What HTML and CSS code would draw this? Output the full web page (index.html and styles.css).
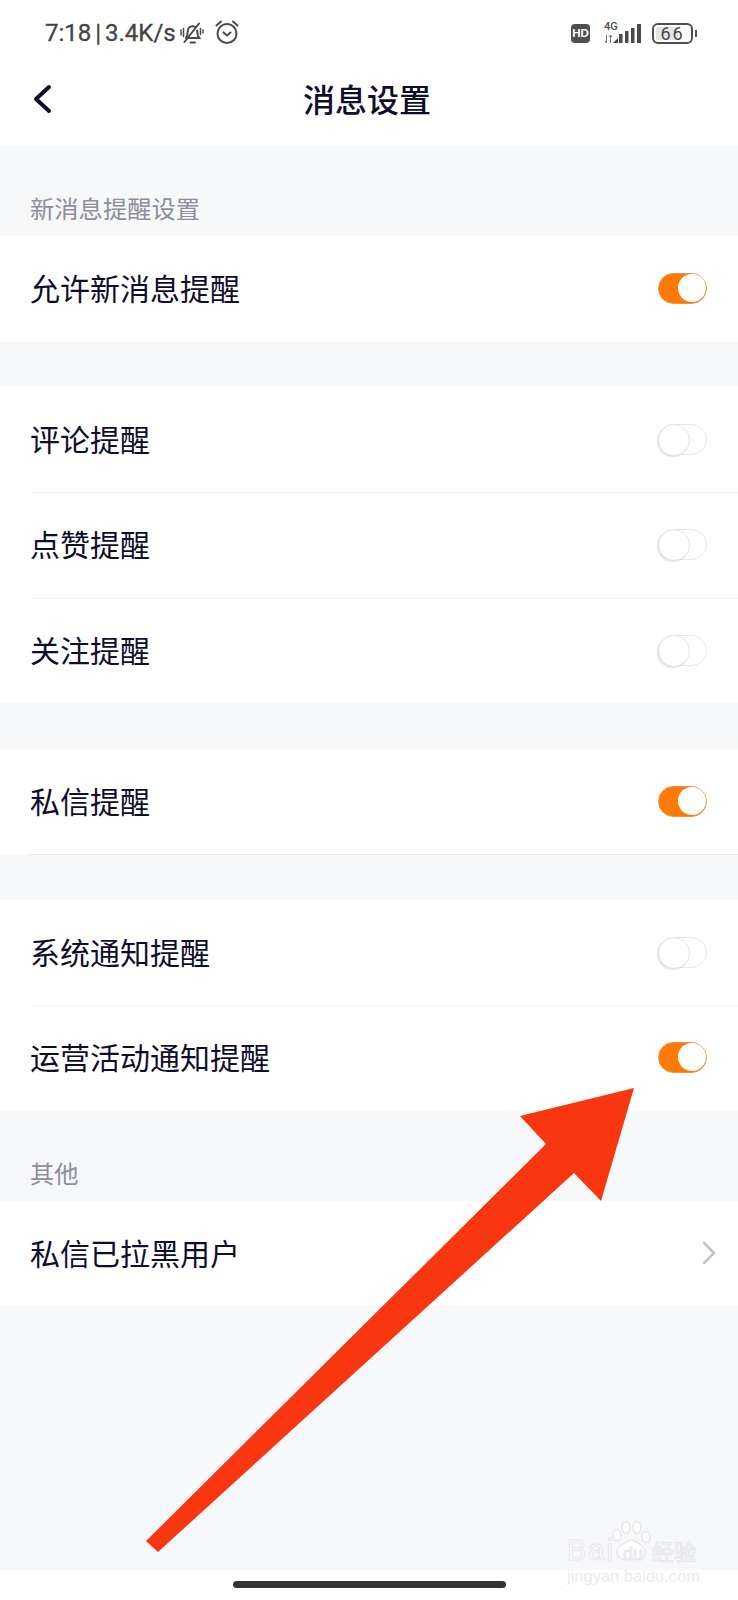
FILE: index.html
```html
<!DOCTYPE html>
<html lang="zh-CN">
<head>
  <meta charset="UTF-8" />
  <meta name="viewport" content="width=device-width, initial-scale=1.0"/>
  <title>消息设置</title>
  <link rel="stylesheet" href="styles.css">
</head>
<body>
  <div class="page">
    <div class="status-bar">
      <div class="status-left">
        <span class="status-text">7:18 | 3.4K/s</span>
        <svg class="icon-bell" width="24" height="22" viewBox="0 0 24 22" fill="none" stroke="#4a4a4a" stroke-width="2" stroke-linecap="round">
          <path d="M6 16c1.500-1.800 1.600-3.500 1.600-6 0-3.400 2-5.800 5-5.800 1 0 1.900.3 2.700.8"/>
          <path d="M17.200 8.500c.2 2.700.2 5.500 2 7.500H9"/>
          <path d="M4.500 20 19 1.500"/>
          <path d="M10.500 20.500h4.500"/>
          <path d="M1 8v5M3.500 6.500v8M20.500 6.500v6M23 8v3" stroke-width="1.500"/>
        </svg>
        <svg class="icon-alarm" width="24" height="24" viewBox="0 0 24 24" fill="none" stroke="#4a4a4a" stroke-width="2" stroke-linecap="round" stroke-linejoin="round">
          <circle cx="12" cy="13.500" r="9.500"/>
          <path d="M8.500 12.500l3.500 3 3.500-3"/>
          <path d="M1.500 5.500 6 1.500M22.500 5.500 18 1.500"/>
        </svg>
      </div>
      <div class="status-right">
        <span class="hd-badge">HD</span>
        <div class="signal">
          <span class="signal-label">4G</span>
          <svg width="37" height="19" viewBox="0 0 37 19" fill="#4a4a4a">
            <path d="M2.500 11v8M1 17l1.500 2M6.500 19v-8M5 13l1.500-2 1.500 2" fill="none" stroke="#777" stroke-width="1"/>
            <path d="M9 19l5-5v5z"/>
            <rect x="15" y="10" width="3.500" height="9"/>
            <rect x="21" y="7" width="3.500" height="12"/>
            <rect x="27" y="4" width="3.500" height="15"/>
            <rect x="33" y="0" width="4" height="19"/>
          </svg>
        </div>
        <div class="battery">
          <div class="battery-body"><span class="battery-fill"></span><span class="battery-num">66</span></div>
          <span class="battery-tip"></span>
        </div>
      </div>
    </div>

    <div class="nav-bar">
      <svg class="back-icon" width="22" height="32" viewBox="0 0 22 32" fill="none" stroke="#0e0e2c" stroke-width="4" stroke-linecap="round" stroke-linejoin="round">
        <path d="M17 4 4 16l13 12"/>
      </svg>
      <div class="nav-title">消息设置</div>
    </div>

    <div class="section-label">新消息提醒设置</div>
    <div class="group">
      <div class="row"><span class="row-text">允许新消息提醒</span><span class="switch on"></span></div>
    </div>

    <div class="group spaced">
      <div class="row"><span class="row-text">评论提醒</span><span class="switch"></span></div>
      <div class="row"><span class="row-text">点赞提醒</span><span class="switch"></span></div>
      <div class="row"><span class="row-text">关注提醒</span><span class="switch"></span></div>
    </div>

    <div class="group spaced wide-gap">
      <div class="row lined"><span class="row-text">私信提醒</span><span class="switch on"></span></div>
    </div>

    <div class="group spaced">
      <div class="row"><span class="row-text">系统通知提醒</span><span class="switch"></span></div>
      <div class="row"><span class="row-text">运营活动通知提醒</span><span class="switch on"></span></div>
    </div>

    <div class="section-label">其他</div>
    <div class="group">
      <div class="row">
        <span class="row-text">私信已拉黑用户</span>
        <svg class="chevron" width="14" height="24" viewBox="0 0 14 24" fill="none" stroke="#c4c4c8" stroke-width="2.600" stroke-linecap="round" stroke-linejoin="round">
          <path d="M2 2l10 10L2 22"/>
        </svg>
      </div>
    </div>

    <div class="filler"></div>
    <div class="home-area"><span class="home-bar"></span></div>

    <svg class="arrow" width="738" height="1600" viewBox="0 0 738 1600">
      <polygon fill="#f83710" points="634,1088 520,1116 546,1144 146,1541 158,1552 574,1173 601,1201"/>
    </svg>

    <div class="watermark">
      <svg class="paw" width="42" height="44" viewBox="0 0 42 44" fill="#fff" stroke="#e6e7ea" stroke-width="1.500">
        <ellipse cx="7" cy="15" rx="4" ry="5.500"/>
        <ellipse cx="16" cy="7.500" rx="4" ry="6"/>
        <ellipse cx="27" cy="7.500" rx="4" ry="6"/>
        <ellipse cx="36" cy="17" rx="4" ry="5.500"/>
        <path d="M21 20c-4 0-6 3-10 5-4 3-5 7-3 11 3 5 9 3 13 3s10 2 13-3c2-4 1-8-3-11-4-2-6-5-10-5z"/>
      </svg>
      <div class="wm-brand"><span class="wm-bai">Bai</span><span class="wm-du">du</span><span class="wm-cn">经验</span></div>
      <div class="wm-url">jingyan.baidu.com</div>
    </div>
  </div>
</body>
</html>
```

FILE: styles.css
```css
* {
  box-sizing: border-box;
}

body {
  margin: 0;
  font-family: "Noto Sans CJK SC", "Noto Sans", sans-serif;
  color: #0e0e2c;
}

.page {
  position: relative;
  width: 738px;
  height: 1600px;
  display: flex;
  flex-direction: column;
  overflow: hidden;
  background: #f7f8fa;
}

/* status bar */
.status-bar {
  height: 64px;
  padding: 2px 41px 0 45px;
  background: #fff;
  display: flex;
  align-items: center;
  justify-content: space-between;
}

.status-left {
  display: flex;
  align-items: center;
}

.status-text {
  font-family: Roboto, sans-serif;
  font-size: 24px;
  word-spacing: -2px;
  color: #444;
  -webkit-text-stroke: 0.3px #444;
}

.icon-bell {
  margin-left: 4px;
}

.icon-alarm {
  margin-left: 11px;
  margin-top: -2px;
}

.status-right {
  display: flex;
  align-items: center;
}

.hd-badge {
  width: 19px;
  height: 19px;
  border-radius: 4px;
  background: #505050;
  color: #fff;
  font-family: "Liberation Sans", sans-serif;
  font-size: 11.5px;
  font-weight: 700;
  line-height: 19px;
  text-align: center;
}

.signal {
  position: relative;
  width: 37px;
  height: 19px;
  margin-left: 14px;
}

.signal-label {
  position: absolute;
  left: 0;
  top: -3px;
  font-family: Roboto, sans-serif;
  font-size: 11px;
  font-weight: 500;
  line-height: 11px;
  color: #4a4a4a;
}

.battery {
  display: flex;
  align-items: center;
  margin-left: 11px;
}

.battery-body {
  position: relative;
  width: 41px;
  height: 21px;
  border: 2px solid #505050;
  border-radius: 6px;
  padding: 2px;
}

.battery-fill {
  display: block;
  width: 66%;
  height: 100%;
  background: #e4e4e4;
}

.battery-num {
  position: absolute;
  inset: 0;
  font-family: Roboto, sans-serif;
  font-size: 18px;
  line-height: 17px;
  letter-spacing: 2px;
  text-align: center;
  color: #484848;
}

.battery-tip {
  width: 2px;
  height: 7px;
  margin-left: 2px;
  background: #505050;
}

/* nav */
.nav-bar {
  position: relative;
  height: 82px;
  background: #fff;
  display: flex;
  align-items: center;
  justify-content: center;
}

.back-icon {
  position: absolute;
  left: 32px;
  top: 19px;
}

.nav-title {
  padding: 0 4px 14px 0;
  font-size: 32px;
  font-weight: 500;
  line-height: 72px;
}

/* list */
.section-label {
  height: 90px;
  padding: 44px 0 0 30px;
  font-size: 24.3px;
  line-height: 36px;
  color: #8e8e9c;
}

.group {
  background: #fff;
}

.spaced {
  margin-top: 45px;
}

.wide-gap {
  margin-top: 46px;
}

.row {
  height: 105.5px;
  padding: 0 31px 0 30px;
  display: flex;
  align-items: center;
  justify-content: space-between;
  font-size: 30px;
  position: relative;
}

.row-text {
  padding-bottom: 3px;
}

.row + .row::before,
.lined::after {
  content: "";
  position: absolute;
  left: 30px;
  right: 0;
  top: 0;
  height: 1px;
  background: #f3f3f5;
}

.lined::after {
  top: auto;
  bottom: 0;
  background: #eaeaee;
}

.switch {
  position: relative;
  width: 49px;
  height: 31px;
  border-radius: 16px;
  background: #fff;
  border: 1.5px solid #e8e8e8;
}

.switch::after {
  content: "";
  position: absolute;
  left: -1px;
  top: -1px;
  width: 30px;
  height: 30px;
  border-radius: 50%;
  background: #fff;
  border: 1.5px solid #e4e4e4;
  box-shadow: -1px 1px 1px rgba(0, 0, 0, 0.12);
}

.switch.on {
  background: #ff7a05;
  border-color: #e4964f;
}

.switch.on::after {
  left: auto;
  right: 0;
  top: 0;
  width: 28px;
  height: 28px;
  border: 0;
  box-shadow: none;
}

.chevron {
  margin-right: -9px;
}

.filler {
  flex: 1;
}

.home-area {
  height: 30px;
  background: #fff;
  padding-top: 11px;
  display: flex;
  justify-content: center;
}

.home-bar {
  width: 273px;
  height: 7px;
  border-radius: 4px;
  background: #333;
}

/* arrow drawn over the screenshot */
.arrow {
  position: absolute;
  left: 0;
  top: 0;
  pointer-events: none;
}

/* watermark */
.watermark {
  position: absolute;
  left: 567px;
  top: 1520px;
  width: 131px;
  font-family: "Liberation Sans", sans-serif;
}

.paw {
  position: absolute;
  left: 43px;
  top: 0;
}

.wm-brand {
  position: relative;
  height: 44px;
  padding-top: 17px;
  display: flex;
  align-items: flex-start;
  color: #fff;
  -webkit-text-stroke: 1px #e6e7ea;
}

.wm-bai {
  width: 51px;
  font-size: 29px;
  line-height: 26px;
  letter-spacing: 2px;
}

.wm-du {
  width: 34px;
  padding-left: 5px;
  padding-top: 8px;
  font-size: 18px;
  line-height: 18px;
}

.wm-cn {
  font-family: "Noto Sans CJK SC", sans-serif;
  font-size: 22px;
  line-height: 26px;
}

.wm-url {
  position: relative;
  margin-top: 2px;
  font-size: 16.5px;
  line-height: 20px;
  white-space: nowrap;
  color: #ebecef;
}
```
